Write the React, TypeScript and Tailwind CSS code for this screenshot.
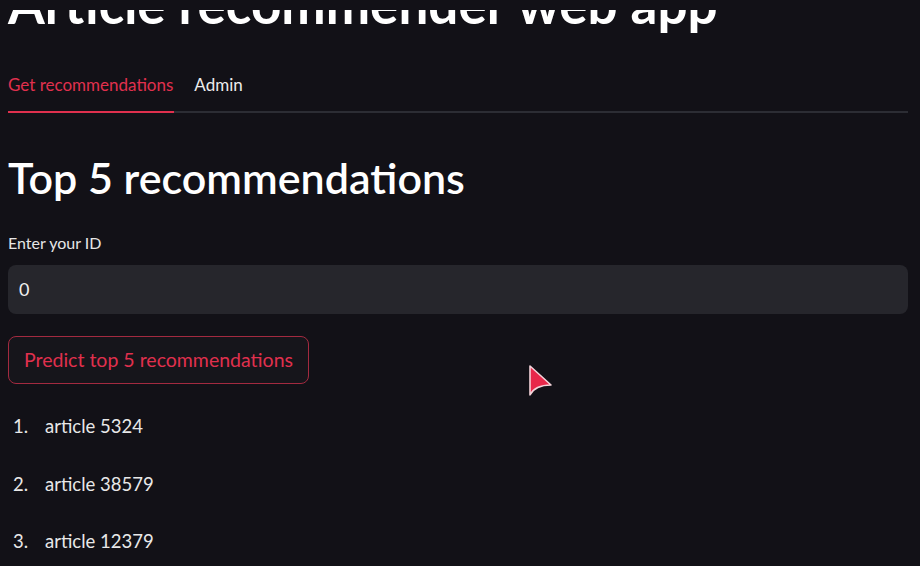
import React from "react";

const items = ["article 5324", "article 38579", "article 12379", "article 771", "article 2048"];

const Cursor: React.FC = () => (
  <svg
    className="absolute left-[527px] top-[364px]"
    width="28"
    height="34"
    viewBox="0 0 28 34"
  >
    <path
      d="M3 2 L3 31 Q8 21 24 21 Z"
      fill="#e8284a"
      stroke="#f3d3d9"
      strokeWidth="1.6"
      strokeLinejoin="round"
    />
  </svg>
);

export default function App() {
  return (
    <div
      className="relative h-[566px] w-[920px] overflow-hidden bg-[#121117] pl-2 pr-3 text-[#fafafa]"
      style={{ fontFamily: "Lato, 'Noto Sans', sans-serif" }}
    >
      {/* fixed header strip that covers the scrolled title */}
      <div className="absolute left-0 right-0 top-0 z-10 h-[10px] bg-[#121117]" />

      <h1 className="-mt-[23px] text-[53px] font-bold leading-[54px] text-white">
        Article recommender web app
      </h1>

      {/* tabs */}
      <div className="mt-[44px] flex border-b-2 border-[#2c2d34]">
        <div className="-mb-[2px] border-b-2 border-[#e0304e] pb-[16px] pr-[1px] text-[17px] leading-5 text-[#e0304e]">
          Get recommendations
        </div>
        <div className="ml-5 pb-[16px] text-[17px] leading-5 text-[#ececec]">Admin</div>
      </div>

      <h2 className="mt-[41px] text-[43px] font-semibold leading-[48px] text-white">
        Top 5 recommendations
      </h2>

      <label className="mt-[31px] block text-[16px] leading-5 text-[#e6e6e6]">Enter your ID</label>
      <div className="mt-[12px] flex h-[49px] items-center rounded-lg bg-[#26262c] px-[11px] text-[18px] text-[#f0f0f0]">
        0
      </div>

      <button className="mt-[22px] flex h-[48px] items-center rounded-lg border border-[#a32a40] bg-[#16151b] px-[15px] text-[19.5px] text-[#e0304e]">
        Predict top 5 recommendations
      </button>

      <ol className="mt-[31px] flex flex-col gap-[35.5px] text-[18.5px] leading-[22px] text-[#e8e8e8]">
        {items.map((it, i) => (
          <li key={it} className="flex">
            <span className="w-[37px] pl-[5px]">{i + 1}.</span>
            <span>{it}</span>
          </li>
        ))}
      </ol>

      <Cursor />
    </div>
  );
}
